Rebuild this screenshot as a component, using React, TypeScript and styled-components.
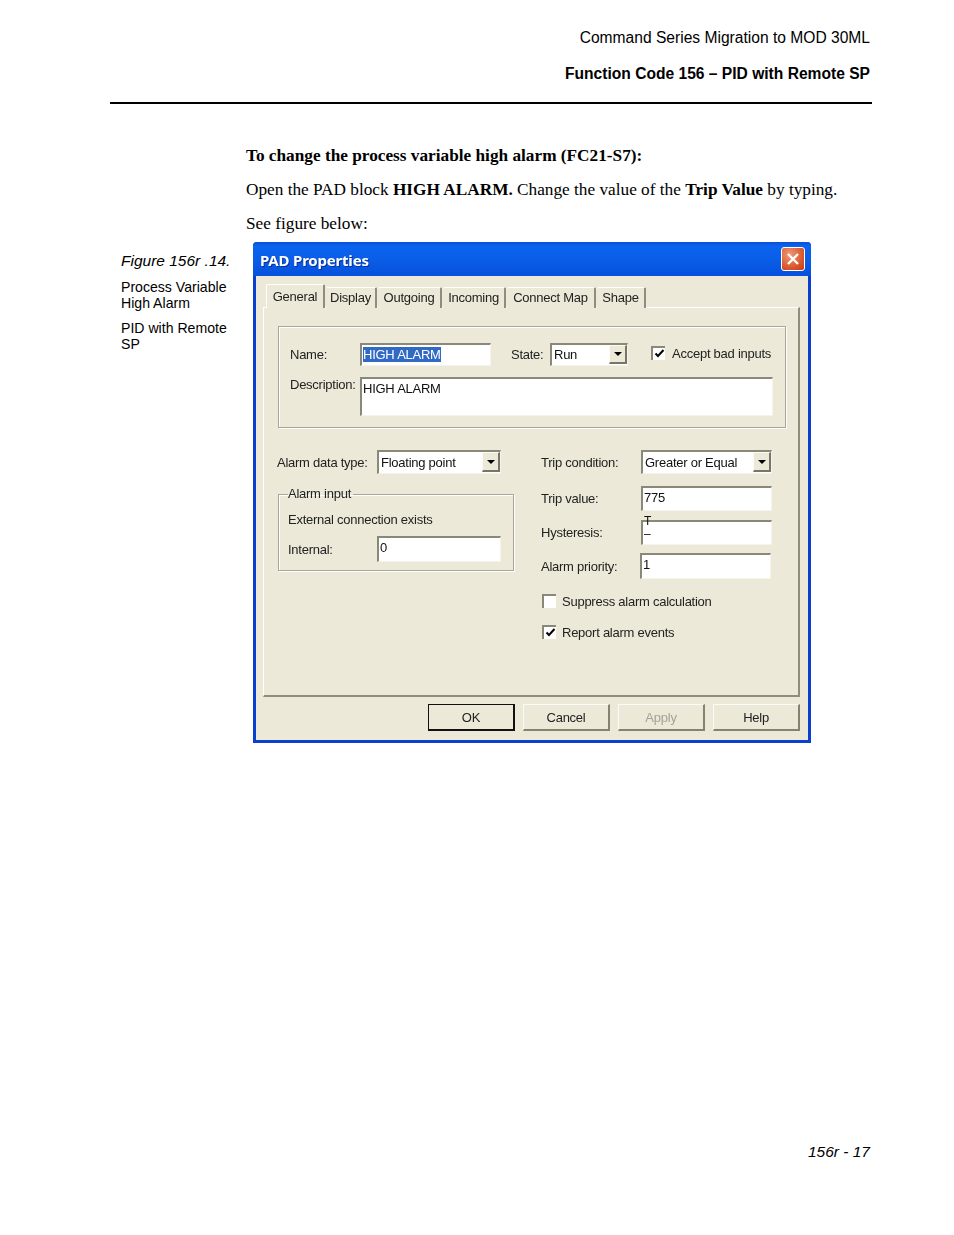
import React from "react";
import styled, { createGlobalStyle } from "styled-components";

const GlobalStyle = createGlobalStyle`
  html, body {
    margin: 0;
    padding: 0;
    background: #fff;
  }
`;

const Page = styled.div`
  width: 954px;
  height: 1235px;
  overflow: hidden;
  color: #000;
  font-family: "Liberation Sans", Arial, sans-serif;
`;

const Header = styled.header`
  width: 762px;
  margin-left: 110px;
  padding: 28px 2px 0 0;
  box-sizing: border-box;
  border-bottom: 2px solid #000;
  height: 104px;
  text-align: right;
  font-size: 15.6px;
  line-height: 20px;
`;
const HeaderTitle = styled.div`
  margin-top: 16px;
  font-weight: 700;
`;

const Body = styled.section`
  margin-left: 246px;
  padding-top: 42px;
  font-family: "Liberation Serif", "Times New Roman", serif;
  font-size: 17.25px;
  line-height: 20px;
`;
const Para = styled.p`
  margin: 0 0 14px;
  &:last-child {
    margin-bottom: 0;
  }
`;

const FigureRow = styled.div`
  display: flex;
  margin: 8px 0 0 121px;
`;
const Caption = styled.aside`
  width: 132px;
  padding-top: 9px;
  font-size: 14.1px;
  line-height: 16px;
`;
const CaptionTitle = styled.div`
  font-style: italic;
  font-size: 15.5px;
  line-height: 20px;
  margin-bottom: 8px;
`;
const CaptionText = styled.div`
  margin-bottom: 9px;
`;

const Dialog = styled.div`
  width: 558px;
  height: 501px;
  box-sizing: border-box;
  background: #ece9d8;
  border: 3px solid #0a3fd0;
  border-top: 0;
  border-radius: 4px 4px 0 0;
  font-family: "Liberation Sans", Arial, sans-serif;
  font-size: 13px;
  letter-spacing: -0.25px;
  color: #222;
  filter: blur(0.3px);
`;
const TitleBar = styled.div`
  display: flex;
  align-items: center;
  justify-content: space-between;
  height: 34px;
  margin: 0 -3px;
  padding: 2px 6px 0 7px;
  box-sizing: border-box;
  border-radius: 4px 4px 0 0;
  background: linear-gradient(
    to bottom,
    #0a4fdc 0%,
    #0a64ee 12%,
    #0a5ee8 50%,
    #0650dc 100%
  );
`;
const TitleText = styled.span`
  color: #fff;
  font-family: "Noto Sans", sans-serif;
  font-weight: 700;
  font-size: 15px;
  letter-spacing: -0.2px;
  text-shadow: 1px 1px 0 #0a2f9c;
`;
const CloseButton = styled.div`
  display: flex;
  align-items: center;
  justify-content: center;
  width: 24px;
  height: 24px;
  margin-bottom: 2px;
  box-sizing: border-box;
  border: 1px solid #fff;
  border-radius: 3px;
  background: radial-gradient(circle at 35% 30%, #ee9a78, #dc5a30 60%, #c23c14);
`;

const TabStrip = styled.div`
  display: flex;
  align-items: flex-end;
  height: 24px;
  margin: 8px 0 0 10px;
`;
const Tab = styled.div<{ $w: number; $active?: boolean }>`
  width: ${(p) => p.$w}px;
  height: ${(p) => (p.$active ? 24 : 21)}px;
  box-sizing: border-box;
  padding-top: ${(p) => (p.$active ? 4 : 2)}px;
  margin-right: 1px;
  text-align: center;
  line-height: 16px;
  background: #ece9d8;
  border-top: 1px solid #fff;
  border-left: ${(p) => (p.$active ? "1px solid #fff" : "0")};
  border-right: 2px solid #8f8d7e;
  border-radius: 2px 2px 0 0;
  position: relative;
  z-index: ${(p) => (p.$active ? 2 : 1)};
`;

const Panel = styled.div`
  width: 537px;
  height: 390px;
  margin: -1px 0 0 7px;
  padding: 18px 13px 0 14px;
  box-sizing: border-box;
  border-top: 1px solid #fff;
  border-left: 1px solid #fff;
  border-right: 2px solid #8f8d7e;
  border-bottom: 2px solid #8f8d7e;
`;

const TopGroup = styled.div`
  width: 508px;
  height: 102px;
  padding: 16px 12px 0 11px;
  box-sizing: border-box;
  border: 1px solid #a8a695;
  box-shadow: inset 1px 1px 0 #fff, 1px 1px 0 #fff;
`;
const Row = styled.div<{ $top?: number }>`
  display: flex;
  align-items: center;
  margin-top: ${(p) => p.$top ?? 0}px;
`;
const Label = styled.span<{ $w?: number; $left?: number; $start?: boolean; $up?: number; $down?: number }>`
  flex: none;
  width: ${(p) => (p.$w ? `${p.$w}px` : "auto")};
  margin-left: ${(p) => p.$left ?? 0}px;
  margin-bottom: ${(p) => p.$up ?? 0}px;
  margin-top: ${(p) => p.$down ?? 0}px;
  align-self: ${(p) => (p.$start ? "flex-start" : "auto")};
  white-space: nowrap;
`;

const Field = styled.div<{ $w: number; $h: number }>`
  flex: none;
  width: ${(p) => p.$w}px;
  height: ${(p) => p.$h}px;
  padding: 1px 0 0 1px;
  box-sizing: border-box;
  background: #fff;
  color: #111;
  line-height: 17px;
  white-space: nowrap;
  border-top: 2px solid #8a8878;
  border-left: 2px solid #8a8878;
  border-right: 1px solid #f6f4ea;
  border-bottom: 1px solid #f6f4ea;
`;
const Selected = styled.span`
  background: #316ac5;
  color: #fff;
`;

const Combo = styled(Field)`
  display: flex;
  justify-content: space-between;
  padding: 0 0 1px 2px;
  align-items: center;
`;
const ComboButton = styled.div`
  display: flex;
  align-items: center;
  justify-content: center;
  width: 18px;
  height: 100%;
  box-sizing: border-box;
  background: #ece9d8;
  border-top: 1px solid #fbfaf4;
  border-left: 1px solid #fbfaf4;
  border-right: 2px solid #77756a;
  border-bottom: 2px solid #77756a;
`;
const Arrow = styled.div`
  width: 0;
  height: 0;
  border-left: 4px solid transparent;
  border-right: 4px solid transparent;
  border-top: 4px solid #000;
`;

const Check = styled.div<{ $left?: number; $right?: number; $up?: number }>`
  display: flex;
  align-items: center;
  justify-content: center;
  flex: none;
  width: 14px;
  height: 14px;
  box-sizing: border-box;
  background: #fff;
  border-top: 2px solid #8a8878;
  border-left: 2px solid #8a8878;
  margin-left: ${(p) => p.$left ?? 0}px;
  margin-right: ${(p) => p.$right ?? 7}px;
  margin-bottom: ${(p) => p.$up ?? 0}px;
`;

const Columns = styled.div`
  display: flex;
  margin-top: 22px;
`;
const LeftColumn = styled.div`
  width: 236px;
  margin-right: 27px;
`;
const RightColumn = styled.div`
  flex: 1;
`;

const GroupBox = styled.fieldset`
  width: 236px;
  height: 84px;
  margin: 13px 0 0;
  padding: 0 0 0 9px;
  box-sizing: border-box;
  border: 1px solid #a8a695;
  box-shadow: inset 1px 1px 0 #fff, 1px 1px 0 #fff;
`;
const GroupLegend = styled.legend`
  margin-left: 0;
  padding: 0 2px 0 0;
  line-height: 14px;
`;
const HysteresisMark = styled.div`
  margin-top: -8px;
  line-height: 13px;
  font-size: 12px;
`;

const Footer = styled.div`
  display: flex;
  justify-content: flex-end;
  gap: 8px;
  margin: 7px 8px 0 0;
`;
const Button = styled.div<{ $primary?: boolean; $disabled?: boolean }>`
  display: flex;
  align-items: center;
  justify-content: center;
  width: 87px;
  height: 27px;
  box-sizing: border-box;
  color: ${(p) => (p.$disabled ? "#a5a394" : "#222")};
  background: #ece9d8;
  border-top: 1px solid ${(p) => (p.$primary ? "#111" : "#fbfaf4")};
  border-left: 1px solid ${(p) => (p.$primary ? "#111" : "#fbfaf4")};
  border-right: 2px solid ${(p) => (p.$primary ? "#111" : "#85836f")};
  border-bottom: 2px solid ${(p) => (p.$primary ? "#111" : "#85836f")};
`;

const PageNumber = styled.div`
  margin-top: 399px;
  padding-right: 84px;
  text-align: right;
  font-style: italic;
  font-size: 15.5px;
  line-height: 20px;
`;

const tabs = [
  { label: "General", w: 59, active: true },
  { label: "Display", w: 51 },
  { label: "Outgoing", w: 64 },
  { label: "Incoming", w: 63 },
  { label: "Connect Map", w: 89 },
  { label: "Shape", w: 49 },
];

function Tick() {
  return (
    <svg width="11" height="10" viewBox="0 0 11 10">
      <path d="M1.5 4.5 L4 7 L9.5 1" fill="none" stroke="#000" strokeWidth="2" />
    </svg>
  );
}

function ComboBox({ w, h, value }: { w: number; h: number; value: string }) {
  return (
    <Combo $w={w} $h={h}>
      <span>{value}</span>
      <ComboButton>
        <Arrow />
      </ComboButton>
    </Combo>
  );
}

export default function App() {
  return (
    <Page>
      <GlobalStyle />
      <Header>
        <div>Command Series Migration to MOD 30ML</div>
        <HeaderTitle>Function Code 156 – PID with Remote SP</HeaderTitle>
      </Header>
      <Body>
        <Para>
          <b>To change the process variable high alarm (FC21-S7):</b>
        </Para>
        <Para>
          Open the PAD block <b>HIGH ALARM.</b> Change the value of the <b>Trip Value</b> by typing.
        </Para>
        <Para>See figure below:</Para>
      </Body>
      <FigureRow>
        <Caption>
          <CaptionTitle>Figure 156r .14.</CaptionTitle>
          <CaptionText>
            Process Variable
            <br />
            High Alarm
          </CaptionText>
          <CaptionText>
            PID with Remote
            <br />
            SP
          </CaptionText>
        </Caption>
        <Dialog>
          <TitleBar>
            <TitleText>PAD Properties</TitleText>
            <CloseButton>
              <svg width="14" height="14" viewBox="0 0 14 14">
                <path d="M2 2 L12 12 M12 2 L2 12" stroke="#fff" strokeWidth="2.4" />
              </svg>
            </CloseButton>
          </TitleBar>
          <TabStrip>
            {tabs.map((t) => (
              <Tab key={t.label} $w={t.w} $active={t.active}>
                {t.label}
              </Tab>
            ))}
          </TabStrip>
          <Panel>
            <TopGroup>
              <Row>
                <Label $w={70}>Name:</Label>
                <Field $w={131} $h={23}>
                  <Selected>HIGH ALARM</Selected>
                </Field>
                <Label $w={39} $left={20}>State:</Label>
                <ComboBox w={78} h={23} value="Run" />
                <Check $left={23} $up={4}>
                  <Tick />
                </Check>
                <Label $up={3}>Accept bad inputs</Label>
              </Row>
              <Row $top={11}>
                <Label $w={70} $start>Description:</Label>
                <Field $w={413} $h={39}>HIGH ALARM</Field>
              </Row>
            </TopGroup>
            <Columns>
              <LeftColumn>
                <Row>
                  <Label $w={100} $left={-1}>Alarm data type:</Label>
                  <ComboBox w={124} h={24} value="Floating point" />
                </Row>
                <GroupBox>
                  <GroupLegend>Alarm input</GroupLegend>
                  <Row $top={11}>
                    <Label>External connection exists</Label>
                  </Row>
                  <Row $top={9}>
                    <Label $w={89}>Internal:</Label>
                    <Field $w={124} $h={26}>0</Field>
                  </Row>
                </GroupBox>
              </LeftColumn>
              <RightColumn>
                <Row>
                  <Label $w={100}>Trip condition:</Label>
                  <ComboBox w={131} h={24} value="Greater or Equal" />
                </Row>
                <Row $top={12}>
                  <Label $w={100}>Trip value:</Label>
                  <Field $w={131} $h={25}>775</Field>
                </Row>
                <Row $top={9}>
                  <Label $w={100}>Hysteresis:</Label>
                  <Field $w={131} $h={25}>
                    <HysteresisMark>
                      T
                      <br />–
                    </HysteresisMark>
                  </Field>
                </Row>
                <Row $top={8}>
                  <Label $w={99}>Alarm priority:</Label>
                  <Field $w={131} $h={26}>1</Field>
                </Row>
                <Row $top={14}>
                  <Check $left={1} $right={6} />
                  <Label $down={1}>Suppress alarm calculation</Label>
                </Row>
                <Row $top={15}>
                  <Check $left={1} $right={6}>
                    <Tick />
                  </Check>
                  <Label $down={1}>Report alarm events</Label>
                </Row>
              </RightColumn>
            </Columns>
          </Panel>
          <Footer>
            <Button $primary>OK</Button>
            <Button>Cancel</Button>
            <Button $disabled>Apply</Button>
            <Button>Help</Button>
          </Footer>
        </Dialog>
      </FigureRow>
      <PageNumber>156r - 17</PageNumber>
    </Page>
  );
}
